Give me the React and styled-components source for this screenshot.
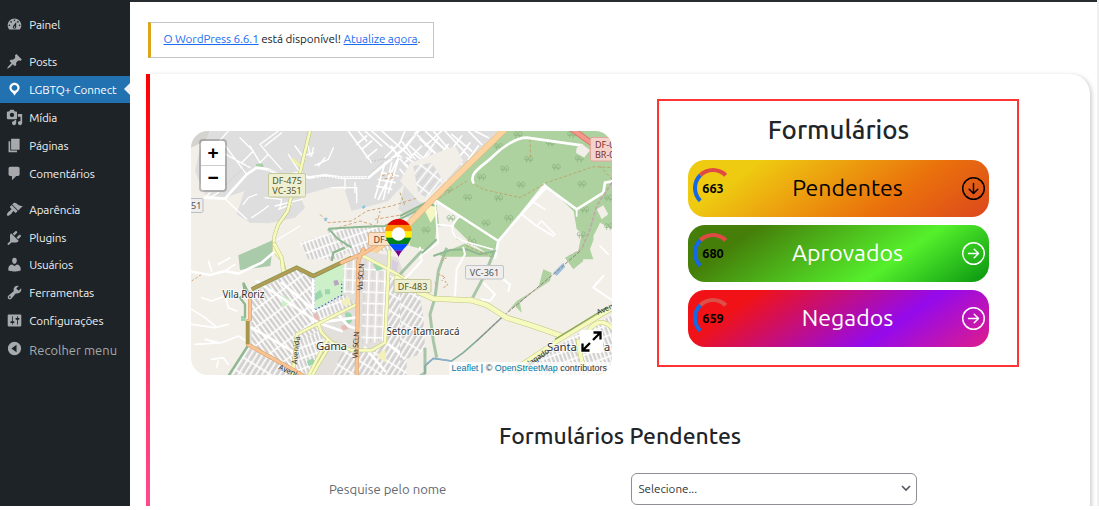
import React from "react";
import styled, { createGlobalStyle, css } from "styled-components";
import { BsArrowRightCircle, BsArrowDownCircle } from "react-icons/bs";

const Global = createGlobalStyle`
  * { box-sizing: border-box; }
  body { margin: 0; background: #fff; overflow: hidden; font-family: Ubuntu, "Noto Sans", "Open Sans", sans-serif; color: #212529; }
`;

const Page = styled.div`
  height: 510px;
  width: 1099px;
  padding-bottom: 4px;
  background: #fff;
`;
const Screen = styled.div`
  display: flex;
  height: 506px;
  overflow: hidden;
  border-right: 2px solid #f0f0f1;
`;

/* ---------- sidebar ---------- */
const Sidebar = styled.nav`
  width: 130px;
  flex: none;
  background: #1d2327;
  padding-top: 11px;
`;
const Separator = styled.div`
  height: ${(p) => p.$h}px;
`;
const MenuItem = styled.div`
  position: relative;
  height: 27.85px;
  display: flex;
  align-items: center;
  padding-left: 6px;
  font-size: 11.7px;
  letter-spacing: ${(p) => p.$ls ?? -0.14}px;
  white-space: nowrap;
  color: #f0f0f1;
  svg {
    width: 17px;
    height: 17px;
    flex: none;
    margin-right: 6.2px;
    fill: #a7aaad;
  }
  ${(p) =>
    p.$active &&
    css`
      background: #2271b1;
      color: #fff;
      svg { fill: #fff; }
      &::after {
        content: "";
        position: absolute;
        right: 0;
        top: 7.5px;
        border: 6.5px solid transparent;
        border-left: 0;
        border-right-color: #f0f0f1;
      }
    `}
  ${(p) =>
    p.$muted &&
    css`
      height: 31px;
      font-size: 12.9px;
      letter-spacing: 0.05px;
      color: #a7aaad;
      svg { transform: translateY(-2px); }
    `}
`;

const ICONS = {
  dashboard:
    "M3.76 16h12.48c1.1-1.37 1.76-3.11 1.76-5 0-4.42-3.58-8-8-8s-8 3.58-8 8c0 1.89.66 3.63 1.76 5zM10 4c.55 0 1 .45 1 1s-.45 1-1 1-1-.45-1-1 .45-1 1-1zM6 6c.55 0 1 .45 1 1s-.45 1-1 1-1-.45-1-1 .45-1 1-1zm8 0c.55 0 1 .45 1 1s-.45 1-1 1-1-.45-1-1 .45-1 1-1zm-5.37 5.55L12 7v6c0 1.1-.9 2-2 2s-2-.9-2-2c0-.57.24-1.08.63-1.45zM4 10c.55 0 1 .45 1 1s-.45 1-1 1-1-.45-1-1 .45-1 1-1zm12 0c.55 0 1 .45 1 1s-.45 1-1 1-1-.45-1-1 .45-1 1-1zm-5 3c0-.55-.45-1-1-1s-1 .45-1 1 .45 1 1 1 1-.45 1-1z",
  post: "M10.44 3.02l1.82-1.82 6.36 6.35-1.83 1.82c-1.05-.68-2.48-.57-3.41.36l-.75.75c-.92.93-1.04 2.35-.35 3.41l-1.83 1.82-2.41-2.41-2.8 2.79c-.42.42-3.38 2.71-3.8 2.29s1.86-3.39 2.28-3.81l2.79-2.79L4.1 9.36l1.83-1.82c1.05.69 2.48.57 3.4-.36l.75-.75c.93-.92 1.05-2.35.36-3.41z",
  location:
    "M10 2C6.69 2 4 4.69 4 8c0 2.02 1.17 3.71 2.53 4.89.43.37 1.18.96 1.85 1.83.74.97 1.41 2.01 1.62 2.71.21-.7.88-1.74 1.62-2.71.67-.87 1.42-1.46 1.85-1.83C14.83 11.71 16 10.02 16 8c0-3.31-2.69-6-6-6zm0 2.56c1.9 0 3.44 1.54 3.44 3.44S11.9 11.44 10 11.44 6.56 9.9 6.56 8 8.1 4.56 10 4.56z",
  media:
    "M13 11V4c0-.55-.45-1-1-1h-1.67L9 1H5L3.67 3H2c-.55 0-1 .45-1 1v7c0 .55.45 1 1 1h10c.55 0 1-.45 1-1zM7 4.5c1.38 0 2.5 1.12 2.5 2.5S8.38 9.5 7 9.5 4.5 8.38 4.5 7 5.62 4.5 7 4.5zM14 6h5v10.5c0 1.38-1.12 2.5-2.5 2.5S14 17.88 14 16.5s1.12-2.5 2.5-2.5c.17 0 .34.02.5.05V9h-3V6zm-4 8.05V13h2v3.5c0 1.38-1.12 2.5-2.5 2.5S7 17.88 7 16.5 8.12 14 9.5 14c.17 0 .34.02.5.05z",
  page: "M6 15V2h10v13H6zm-1 1h8v2H3V5h2v11z",
  comments:
    "M5 2h9c1.1 0 2 .9 2 2v7c0 1.1-.9 2-2 2h-2l-5 5v-5H5c-1.1 0-2-.9-2-2V4c0-1.1.9-2 2-2z",
  appearance:
    "M14.48 11.06L7.41 3.99l1.5-1.5c.5-.56 2.3-.47 3.51.32 1.21.8 1.43 1.28 2.91 2.1 1.18.64 2.45 1.26 4.45.85zm-.71.71L6.7 4.7 4.93 6.47c-.39.39-.39 1.02 0 1.41l1.06 1.06c.39.39.39 1.03 0 1.42-.6.6-1.43 1.11-2.21 1.69-.35.26-.7.53-1.01.84C1.43 14.23.4 16.08 1.4 17.07c.99 1 2.84-.03 4.18-1.36.31-.31.58-.66.85-1.02.57-.78 1.08-1.61 1.69-2.21.39-.39 1.02-.39 1.41 0l1.06 1.06c.39.39 1.02.39 1.41 0z",
  plugins:
    "M13.11 4.36L9.87 7.6 8 5.73l3.24-3.24c.35-.34 1.05-.2 1.56.32.52.51.66 1.21.31 1.55zm-8 1.77l.91-1.12 9.01 9.01-1.19.84c-.71.71-2.63 1.16-3.82 1.16H6.14L4.9 17.26l-1.5 1.2c-.38.38-.97.38-1.35 0s-.38-.97 0-1.35l1.4-1.4 1.340-1.35V12.1c0-1.190-.390-5.260.320-5.970zM17.51 8.760L14.270 12 12.400 10.130l3.240-3.240c.350-.340 1.050-.200 1.560.320.520.510.660 1.210.310 1.550z",
  users:
    "M10 9.25c-2.27 0-2.73-3.44-2.73-3.44C7 4.02 7.82 2 9.97 2c2.16 0 2.98 2.02 2.71 3.81 0 0-.41 3.44-2.68 3.44zm0 2.57L12.72 10c2.39 0 4.52 2.33 4.52 4.53v2.49s-3.65 1.13-7.24 1.13c-3.65 0-7.24-1.13-7.24-1.13v-2.49c0-2.25 1.94-4.48 4.47-4.48z",
  tools:
    "M16.68 9.77c-1.34 1.34-3.3 1.67-4.95.99l-5.41 6.52c-.99.99-2.59.99-3.58 0s-.99-2.59 0-3.57l6.52-5.42c-.68-1.65-.35-3.61.99-4.95 1.28-1.28 3.12-1.62 4.72-1.06l-2.89 2.89 2.82 2.82 2.86-2.87c.53 1.58.18 3.39-1.08 4.65zM3.81 16.21c.4.39 1.04.39 1.43 0 .4-.4.4-1.04 0-1.43-.39-.4-1.03-.4-1.43 0-.39.39-.39 1.03 0 1.43z",
  settings:
    "M18 16V4c0-.55-.45-1-1-1H3c-.55 0-1 .45-1 1v12c0 .55.45 1 1 1h14c.55 0 1-.45 1-1zM8 11h1c.55 0 1 .45 1 1s-.45 1-1 1H8v1.5c0 .28-.22.5-.5.5s-.5-.22-.5-.5V13H6c-.55 0-1-.45-1-1s.45-1 1-1h1V5.5c0-.28.22-.5.5-.5s.5.22.5.5V11zm5-2h-1c-.55 0-1-.45-1-1s.45-1 1-1h1V5.5c0-.28.22-.5.5-.5s.5.22.5.5V7h1c.55 0 1 .45 1 1s-.45 1-1 1h-1v5.5c0 .28-.22.5-.5.5s-.5-.22-.5-.5V9z",
  collapse:
    "M10 2.2a7.8 7.8 0 1 0 0 15.6a7.8 7.8 0 1 0 0-15.6zM12.4 5.6v8.8L6.4 10z",
};

const Item = ({ icon, label, ...rest }) => (
  <MenuItem {...rest}>
    <svg viewBox="0 0 20 20">
      <path fillRule="evenodd" d={ICONS[icon]} />
    </svg>
    {label}
  </MenuItem>
);

/* ---------- main column ---------- */
const Main = styled.main`
  flex: 1;
  border-top: 2px solid #272c31;
  padding: 20px 8px 0 16px;
`;
const Notice = styled.div`
  width: 286px;
  height: 36px;
  margin-left: 2px;
  border: 1px solid #c3c4c7;
  border-left: 3px solid #dba617;
  display: flex;
  align-items: center;
  padding: 0 0 3px 12.5px;
  font-size: 11.7px;
  letter-spacing: -0.09px;
  white-space: pre;
  a { color: #1a6df0; text-decoration: underline; }
`;
const Card = styled.section`
  position: relative;
  margin-top: 16px;
  width: 943.5px;
  height: 480px;
  padding: 24.5px 70px 0 45px;
  border-radius: 0 20px 0 0;
  box-shadow: 2px 1px 4px rgba(0, 0, 0, 0.18);
  background: linear-gradient(#ff0000 0, #ff1a2c 110px, #ff4a90 433px) left / 4px 100% no-repeat, #fff;
`;
const TopRow = styled.div`
  display: flex;
  align-items: flex-start;
  justify-content: space-between;
`;
const MapBox = styled.div`
  position: relative;
  width: 421px;
  height: 244px;
  margin-top: 32px;
  border-radius: 17px;
  overflow: hidden;
  > svg { display: block; }
`;
const ZoomControl = styled.div`
  position: absolute;
  left: 8px;
  top: 8px;
  width: 28px;
  border: 2px solid rgba(0, 0, 0, 0.22);
  border-radius: 4px;
  background: #fff;
  background-clip: padding-box;
`;
const ZoomButton = styled.div`
  height: 24.5px;
  display: grid;
  place-items: center;
  font: bold 19px/24px "Liberation Sans", sans-serif;
  color: #000;
  & + & { border-top: 1px solid #ccc; }
`;
const Attribution = styled.div`
  position: absolute;
  right: 0;
  bottom: 0;
  height: 13px;
  padding: 0 5px 0 3px;
  background: rgba(255, 255, 255, 0.75);
  font: 8.95px/13px "Liberation Sans", sans-serif;
  white-space: pre;
  color: #333;
  a { color: #0078a8; }
`;
const Expand = styled.div`
  position: absolute;
  right: 9px;
  bottom: 22px;
  width: 23px;
  height: 23px;
  background: #fff;
  border-radius: 3px;
  svg { display: block; }
`;

const Panel = styled.div`
  width: 362px;
  height: 268.5px;
  margin-right: 0.5px;
  border: 2px solid #ff3535;
  padding: 13.5px 28px 0 29px;
`;
const PanelTitle = styled.h2`
  margin: 0 0 13.5px;
  height: 32px;
  font-size: 25.9px;
  line-height: 32px;
  font-weight: 550;
  text-align: center;
`;
const StatusButton = styled.div`
  display: flex;
  align-items: center;
  height: 57px;
  margin-bottom: 8px;
  padding: 0 4.5px 0 5px;
  border-radius: 17px;
  background: linear-gradient(145deg, ${(p) => p.$stops});
  color: ${(p) => p.$color};
  > svg { width: 23px; height: 23px; flex: none; }
`;
const Counter = styled.div`
  width: 40px;
  height: 40px;
  flex: none;
  display: flex;
  align-items: center;
  justify-content: center;
  border: 4px solid transparent;
  border-left-color: #1668e3;
  border-top-color: ${(p) => p.$top || "#e04a44"};
  border-radius: 50%;
  color: #000;
  font-size: 12.7px;
  line-height: 16px;
  padding-bottom: 1px;
  font-weight: 700;
`;
const StatusLabel = styled.span`
  flex: 1;
  text-align: center;
  padding: 0 0 3px 0.5px;
  font-size: 23.1px;
`;

const SectionTitle = styled.h3`
  margin: 46px 0 0 -1px;
  width: 860px;
  height: 30px;
  font-size: 22.9px;
  line-height: 30px;
  font-weight: 550;
  text-align: center;
`;
const SearchRow = styled.div`
  display: flex;
  align-items: center;
  margin-top: 22px;
  padding-left: 138px;
`;
const SearchLabel = styled.label`
  width: 302px;
  font-size: 13.1px;
  color: #646970;
`;
const Select = styled.div`
  width: 286px;
  height: 32px;
  border: 1px solid #8c8f94;
  border-radius: 6px;
  padding: 0 5px 1px 6.5px;
  display: flex;
  align-items: center;
  justify-content: space-between;
  font-size: 11.6px;
  color: #2c3338;
`;

/* ---------- map drawing ---------- */
const MapText = styled.text`
  font-family: "Noto Sans", sans-serif;
  font-size: ${(p) => p.$s || 11}px;
  fill: ${(p) => p.$c || "#333"};
  paint-order: stroke;
  stroke: ${(p) => (p.$halo ? "rgba(255,255,255,.75)" : "none")};
  stroke-width: 2px;
`;

const TREES = [
  [295, 60], [385, 98], [313, 127], [468, 122], [244, 152], [362, 175], [545, 173], [202, 213],
  [295, 215], [257, 290], [77, 311], [152, 275], [553, 250], [215, 347], [543, 325], [450, 50],
  [625, 215], [537, 97], [353, 24], [514, 24], [625, 300], [142, 190], [325, 275],
];
const Tree = ({ x, y }) => (
  <path
    transform={`translate(${x} ${y})`}
    d="M-5 12V-2M-10 4a5.500 7 0 1 1 9 0zM6 12V0M2 5a5.500 9 0 1 1 10 0z"
    fill="none"
    stroke="#86b07b"
    strokeWidth="2"
  />
);
const Road = ({ d, w = 12, c = "#f7fabf", e = "#c3c87c" }) => (
  <g fill="none" strokeLinejoin="round" strokeLinecap="round">
    <path d={d} stroke={e} strokeWidth={w + 3} />
    <path d={d} stroke={c} strokeWidth={w} />
  </g>
);
const Streets = ({ d, w = 5 }) => (
  <path d={d} fill="none" stroke="#fff" strokeWidth={w} strokeLinejoin="round" strokeLinecap="round" />
);
const Grid = ({ id, a, w = 13, h = 44, bg = "#d8d6d5" }) => (
  <pattern id={id} width={w} height={h} patternUnits="userSpaceOnUse" patternTransform={`rotate(${a})`}>
    <rect width={w} height={h} fill={bg} />
    <path d={`M0 0H${w}M0 0V${h}`} stroke="#fff" strokeWidth="9" />
    <path d={`M${w / 2 + 2} 6V${h - 6}`} stroke="#b9b5b4" strokeWidth="1.6" strokeDasharray="4 3" />
  </pattern>
);
const Shield = ({ x, y, w, h, fill, stroke, color, lines, tx }) => (
  <g>
    <rect x={x} y={y} width={w} height={h} rx="1.5" fill={fill} stroke={stroke} />
    {lines.map((t, i) => (
      <MapText key={t} x={tx ?? x + w / 2} y={y + 10 + i * 10} $s={9} $c={color} textAnchor={tx ? "start" : "middle"}>
        {t}
      </MapText>
    ))}
  </g>
);

const CityMap = () => (
  <svg width="421" height="244" viewBox="191 130 421 244">
    <defs>
      <Grid id="gA" a={-36} />
      <Grid id="gB" a={32} w={15} />
      <Grid id="gC" a={2} w={24} h={34} bg="#e2dfdc" />
      <Grid id="gD" a={-20} w={12} h={30} />
      <Grid id="gE" a={38} w={24} h={52} bg="#dddcdc" />
      <clipPath id="pinClip">
        <path d="M398.500 256c-2-7-13.500-13-13.500-24.500a13.500 13.500 0 0 1 27 0c0 11.500-11.500 17.500-13.500 24.500z" />
      </clipPath>
    </defs>
    <rect x="191" y="130" width="421" height="244" fill="#f2efe9" />

    {/* north-west quarter */}
    <g transform="translate(185 125) scale(.33333)">
      <path fill="#dfdede" d="M78 15H965L930 60 760 225 700 300 640 250 660 170 610 225 500 255 475 180 430 185 345 210 360 245 330 275 250 292 195 290 155 265 178 195 120 215 60 205 30 135 50 50z" />
      <path fill="#d5d3cf" d="M18 40L50 15H75L60 45 18 65z" />
      <path fill="#a9cbaa" d="M160 388L262 343V375L256 420 165 432z" />
      <path fill="url(#gD)" d="M425 310L560 305 640 290 660 375H560L500 390 480 365 435 330z" />
      <path fill="url(#gD)" d="M345 350L425 325 485 375 470 400 370 400z" />
      <path fill="#a8cfa8" d="M212 115l20-3 5 10-22 3z" />
      <Streets w={8} d="M60 215L120 218 185 145 215 125 250 130 290 150 345 140 370 155 420 148 470 155 550 155 660 65 700 15" />
      <Streets w={4} d="M85 65L195 125M110 45L185 145M130 15L85 65 50 110M165 35L205 75 170 110M195 60L225 110 250 85 225 55 280 15M250 85L290 130M310 85L345 140M330 60L360 100M355 90L385 80M290 20L240 60M370 60L375 90M385 65L380 90M390 118L430 100 445 65M420 95L400 120M480 158V190M440 185H515V230M510 200V170M120 218L185 280M175 235L190 215 215 205M200 275L230 255 250 240M270 240L350 220M240 215L290 220 285 245M280 250L320 235M320 315L345 300 270 345M60 215L75 200M75 215L100 200" />
      <Streets w={5} d="M490 15L560 110M520 15L545 45M540 15L590 60M560 15L650 95M590 15L680 95M515 55L545 30M530 70L560 45M545 95L575 70M600 95L650 45 690 100M620 60L640 95 580 220M600 110L570 215M620 110L595 220M640 100L610 200M575 180L620 190M580 160L630 170M590 140L640 150M660 15L640 60M690 20L760 90M720 15L780 70M745 15L830 115M640 95L760 200M665 95L700 120M690 85L790 170M760 35L690 130M790 55L710 165M820 85L745 190M850 15L890 55M780 15L850 90M700 150L760 230M685 120L665 140 720 210M770 15L720 60M800 25L860 75M870 15L910 35M675 60L740 120M705 40L775 105M735 30L805 95M655 110L735 200M645 130L715 215M710 60L660 110M740 75L675 150M770 100L700 185M830 30L800 70M855 50L825 90M880 60L850 100" />
      <g stroke="#bdbbb9" strokeWidth="1.500" strokeDasharray="5 4" fill="none">
        <path d="M550 105L650 95M560 110L600 95M650 45L720 15M540 160L600 100M705 45L770 120M730 30L800 110M680 90L740 160M700 140L650 100M105 190L190 115M250 130L300 150M390 153L550 155" />
      </g>
      <path d="M405 265L430 290 500 285 545 255 620 240 700 215M460 305L525 285 575 300 585 255M570 280L660 265M590 150L620 140 625 155 590 160" fill="none" stroke="#cfa77a" strokeWidth="3" strokeDasharray="10 6" />
      <path d="M425 275l-5 10M540 240l-8 6" stroke="#8dc6dd" strokeWidth="7" />
      <path d="M430 308L520 303 600 300 660 272 720 240M430 308L460 340 500 365" fill="none" stroke="#8fb890" strokeWidth="6" />
      <Road w={8} d="M376 10L345 140 318 215 308 255 280 295 268 330V375L290 400 298 430" e="#b9bf70" />
      <path d="M322 98L345 120" stroke="#eff2a0" strokeWidth="8" />
    </g>

    {/* north-east quarter */}
    <g transform="translate(400 125) scale(.33333)">
      <path fill="#f2efe9" d="M30 112L165 60 190 105 85 225 60 230 0 165z" />
      <path fill="url(#gE)" d="M40 120L95 110 130 165 80 215 55 200z" />
      <path fill="#aed1a0" d="M318 15H640V165L555 235 520 255 432 170 295 345 280 395 205 345 160 300 180 270 105 222z" />
      <path fill="#aed1a0" d="M60 235L110 240 118 300 160 320 190 350 280 392 130 392 90 375 30 360 20 300z" />
      <path fill="#f2efe9" d="M110 300L160 310 170 340 200 350 150 372 100 392 60 392 105 345z" />
      <path fill="#aed1a0" d="M520 250L560 225 640 160V310L600 290 570 370 580 400H530L545 320 530 310z" />
      <path fill="#f2efe9" d="M590 250L610 238 625 265 605 280zM580 330L600 292 640 330V390H585z" />
      <path fill="#f5f8c5" d="M68 240L98 228 112 260 92 290z" />
      {TREES.map(([x, y]) => <Tree key={`${x}-${y}`} x={x} y={y} />)}
      <path d="M390 40L392 100M215 170L250 190 360 215 440 170 580 122 640 125M105 225L200 165M210 330L200 360 280 395M600 120L640 165M0 200L15 240" fill="none" stroke="#b9a86a" strokeWidth="3" strokeDasharray="9 6" />
      <path d="M0 270L75 232 110 240M100 390L150 372 200 370 240 385 290 375 290 355M60 388L110 340" fill="none" stroke="#8fb890" strokeWidth="6" />
      <Streets w={8} d="M220 170C205 140 250 120 280 90S350 35 380 35L545 58M105 222L295 345 285 395M295 345L350 280 435 180 530 250 610 200 615 170 640 165" />
      <Streets d="M105 222L110 295 160 300M180 270C145 300 150 330 190 345L285 372M110 295L115 350 60 392M365 265L410 300 460 330 M395 225L435 250M410 300L425 285 465 325M440 185L360 270M530 250V270M600 360L625 385" />
      <path fill="#f2efe9" d="M530 65l15-12 25 20-18 22-24-15z" />
      <path d="M645 155L590 240 570 310 545 370 500 395" fill="none" stroke="#c2a5ab" strokeWidth="5" strokeDasharray="12 5" />
      <path d="M510 5L580 55" stroke="#da7968" strokeWidth="18" /><path d="M510 5L580 55" stroke="#f3998b" strokeWidth="12" />
      <Streets w={7} d="M300 15L185 130 85 232" />
      <Road w={16} c="#fbd3a1" e="#e9b673" d="M325 0L110 208 20 300-90 385-150 430" />
    </g>

    {/* south-west quarter */}
    <g transform="translate(185 250) scale(.33333)">
      <path fill="#e3e0dc" d="M190 130L335 50 385 75 500 20 550 0 640 20 660 80V380H130L188 285z" />
      <path fill="url(#gA)" d="M200 130L335 55 385 75V180L400 240 330 375 200 280z" />
      <path fill="url(#gB)" d="M135 375L190 290 330 365V380z" />
      <path fill="url(#gD)" d="M388 180L480 130 510 160 400 215z" />
      <path fill="url(#gD)" d="M345 270L400 240 430 285 380 360 335 375z" />
      <path fill="url(#gC)" d="M475 30L515 20 510 130 475 125zM535 20L605 60 600 270 530 280z" />
      <path fill="url(#gB)" d="M610 75H665V380H440L470 300H540L605 275z" />
      <path fill="#cdf0c8" d="M388 82L475 38 473 130 388 178zM290 132L320 150 292 172z" />
      <path d="M388 82V178L470 132V90" fill="none" stroke="#3b62c4" strokeWidth="4" strokeDasharray="4 7" />
      <path fill="#9dd6ae" d="M388 130l18-14 8 20-24 14zM420 115h15v15h-15zM480 185q20-5 22 15t-20 20zM168 195h14v15h-14zM565 40l15-5 15 20-20 5zM365 330l20-8 6 16-20 8z" />
      <path fill="#b9a5c2" d="M445 90l12-4 6 14-14 5z" />
      <path fill="#f3f1b9" d="M470 150l20-12 8 20-22 8zM580 310l20-15 5 40-25-15z" />
      <path fill="#e7bcb5" d="M383 190l12-5 15 35-12 5zM468 225l18-6 4 15-18 5z" />
      <path fill="#d9cde0" d="M620 25l20 10-5 35-15-8z" />
      <Streets w={8} d="M10 60L75 72 120 60 160 68 230 35 265 5M215 90L400 215 470 240M200 230L330 305M290 95L390 180M400 215L510 200M385 180V80M455 185L490 225 520 235M610 280L660 320M540 290L600 360" />
      <Streets w={5} d="M50 140L80 150 120 135 130 170 155 180M20 220L90 230 130 220M20 175L60 200 90 225M30 280L110 275 160 255 185 270M60 265L100 275M80 325L115 320 130 340M100 330L95 350M150 40L120 60M70 30L80 60M135 20L100 40" />
      <path d="M20 90L50 70" stroke="#d4ab79" strokeWidth="3" strokeDasharray="8 5" />
      <path d="M130 375L188 285M190 125L175 95 180 130 165 140 180 160V200M440 30L445 5 480-10" fill="none" stroke="#8fb890" strokeWidth="7" />
      <Road w={9} d="M268-20L290 20 295 65 300 60" />
      <Road w={8} d="M515 160L335 250 322 385M400 220L410 245 440 275 500 298H560L600 275 613 0M535 15L620 60 680 95M440 275L400 340 375 385M425 270L370 375" />
      <path d="M200 115L335 50 385 75 500 20" fill="none" stroke="#8c9a4d" strokeWidth="13" /><path d="M200 115L335 50 385 75 500 20" fill="none" stroke="#b79b58" strokeWidth="7" />
      <Road w={9} c="#f9c394" e="#d69d65" d="M195 125V205M188 210V280L250 315 340 365 370 385M535-5L520 30 515 375M470 35L540 5 600-35" />
      <path d="M188 210V280" stroke="#a6974c" strokeWidth="10" />
    </g>

    {/* south-east quarter */}
    <g transform="translate(400 250) scale(.33333)">
      <path fill="url(#gB)" d="M0 110L60 130 70 200 75 290 60 310 0 330z" />
      <path fill="url(#gD)" d="M340 370L470 285 530 250 640 190V350L590 375z" />
      <path fill="#aed1a0" d="M320 185L350 150 415 110 430 55 455 65 450 90 390 130 360 155 365 185 345 165zM495 20L545-5 550 30 520 55z" />
      <path fill="#9bbfd8" d="M460 65L490 35 495 48 470 75z" />
      <Streets w={6} d="M60-10L65 30 0 100M165 135L170 55 195 10 190-10M580 110L610 75M250 95L285 130 270 150 245 145M270 55L330 100 325 120M580 110L640 150M590 95L580 110" />
      <path d="M105 140L90 190 100 270 110 320M140-10L115 60 105 140M218 140L255 70 285-5M75 290L75 365 60 375M0 70L65 0" fill="none" stroke="#95ba96" strokeWidth="9" opacity=".8" />
      <path d="M310 195L235 265 190 305 155 330 100 322 75 345V370" fill="none" stroke="#83ad9d" strokeWidth="5" />
      <path d="M540 0L460 70 400 120 310 195 230 270" fill="none" stroke="#967d86" strokeWidth="3" strokeDasharray="12 4" />
      <path d="M155 330L100 322 78 340" fill="none" stroke="#88aed1" strokeWidth="4" />
      <path d="M115 70l20 8-10 12M140 20l-15 10M135 90l8 12-16 10M105 95l8 10" fill="none" stroke="#d19d67" strokeWidth="3" strokeDasharray="7 4" />
      <Road w={14} d="M-10 80L60 125 100 143 215 148 260 162 320 200 400 225 485 255" e="#bfc583" />
      <Road w={11} d="M350 350L480 265 640 170M555 260C575 210 610 200 640 235M535 270C540 310 545 330 550 345M640 350L600 375" />
      <path d="M350 365L450 300M465 265L620 170" stroke="#8ca956" strokeWidth="4" />
    </g>

    <MapText $halo x="222.500" y="296.500" $s={10} textLength="42">Vila Roriz</MapText>
    <MapText $halo x="316" y="349" $s={11.500} textLength="31">Gama</MapText>
    <MapText $halo x="386.500" y="333.500" $s={10} textLength="73">Setor Itamaracá</MapText>
    <MapText $halo x="547" y="349.500" $s={11.500} textLength="30">Santa</MapText>
    <MapText $halo x="604" y="349.500" $s={11}>a</MapText>
    <MapText $s={7.2} transform="translate(362.500 289.500) rotate(-87)" textLength="27">Via SCLN</MapText>
    <MapText $s={7.2} transform="translate(357.500 357.500) rotate(-87)" textLength="27">Via SCLN</MapText>
    <MapText $s={7.5} transform="translate(297 363.500) rotate(-84)" textLength="28">Avenida</MapText>
    <MapText $s={7.5} transform="translate(278 368) rotate(24)">Aveni</MapText>
    <MapText $s={7.5} transform="translate(598 314) rotate(-24)">Aven</MapText>
    <MapText $s={7.5} transform="translate(530 365) rotate(-35)">lagado</MapText>

    <Shield x={268.500} y={172.500} w={37} h={23.500} fill="#eff0d3" stroke="#c4c99b" color="#53562a" lines={["DF-475", "VC-351"]} />
    <Shield x={172} y={197.500} w={31} h={14} tx={191} fill="#eee" stroke="#bcbcc4" color="#555" lines={["51"]} />
    <Shield x={368.500} y={231.500} w={40} h={13} tx={373.500} fill="#fae0c8" stroke="#d9b58d" color="#6b4323" lines={["DF-"]} />
    <Shield x={394} y={278.500} w={37} h={13} fill="#eff0d3" stroke="#c4c99b" color="#53562a" lines={["DF-483"]} />
    <Shield x={465.500} y={264.500} w={38} h={13.500} fill="#eee" stroke="#c4c4c8" color="#555" lines={["VC-361"]} />
    <Shield x={590.500} y={136.500} w={42} h={23.500} tx={595} fill="#f4d2cc" stroke="#e3a59c" color="#7c2d24" lines={["DF-0", "BR-0"]} />

    <g clipPath="url(#pinClip)">
      {["#e50000", "#ff8d00", "#ffee00", "#028121", "#004cff", "#770088"].map((c, i) => (
        <rect key={c} x="384" y={217.500 + i * 6.4} width="30" height="6.600" fill={c} />
      ))}
    </g>
    <circle cx="398.500" cy="233" r="6.800" fill="#fff" />
  </svg>
);

export default function App() {
  return (
    <Page>
      <Global />
      <Screen>
        <Sidebar>
          <Item icon="dashboard" label="Painel" />
          <Separator $h={8.9} />
          <Item icon="post" label="Posts" />
          <Item icon="location" label="LGBTQ+ Connect" $active />
          <Item icon="media" label="Mídia" />
          <Item icon="page" label="Páginas" />
          <Item icon="comments" label="Comentários" />
          <Separator $h={8.4} />
          <Item icon="appearance" label="Aparência" />
          <Item icon="plugins" label="Plugins" />
          <Item icon="users" label="Usuários" />
          <Item icon="tools" label="Ferramentas" />
          <Item icon="settings" label="Configurações" />
          <Item icon="collapse" label="Recolher menu" $muted />
        </Sidebar>
        <Main>
          <Notice>
            <a>O WordPress 6.6.1</a> está disponível! <a>Atualize agora</a>.
          </Notice>
          <Card>
            <TopRow>
              <MapBox>
                <CityMap />
                <ZoomControl>
                  <ZoomButton>+</ZoomButton>
                  <ZoomButton>−</ZoomButton>
                </ZoomControl>
                <Expand>
                  <svg viewBox="0 0 23 23" fill="none" stroke="#000" strokeWidth="2.300">
                    <path d="M13 10L20 3M13.500 2.500H20.500V9.500M10 13L3 20M2.500 13.500V20.500H9.500" />
                  </svg>
                </Expand>
                <Attribution>
                  <a>Leaflet</a> | © <a>OpenStreetMap</a> contributors
                </Attribution>
              </MapBox>
              <Panel>
                <PanelTitle>Formulários</PanelTitle>
                <StatusButton $color="#000" $stops="#eecb11 19%, #ea720c 67%, #dc471d 100%">
                  <Counter>663</Counter>
                  <StatusLabel>Pendentes</StatusLabel>
                  <BsArrowDownCircle />
                </StatusButton>
                <StatusButton $color="#fff" $stops="#457f0a 19%, #55f02c 67%, #089410 100%">
                  <Counter>680</Counter>
                  <StatusLabel>Aprovados</StatusLabel>
                  <BsArrowRightCircle />
                </StatusButton>
                <StatusButton $color="#fff" $stops="#f01216 19%, #940aec 67%, #e01c8a 100%">
                  <Counter $top="#dc5048">659</Counter>
                  <StatusLabel>Negados</StatusLabel>
                  <BsArrowRightCircle />
                </StatusButton>
              </Panel>
            </TopRow>
            <SectionTitle>Formulários Pendentes</SectionTitle>
            <SearchRow>
              <SearchLabel>Pesquise pelo nome</SearchLabel>
              <Select>
                Selecione...
                <svg width="10" height="10" viewBox="0 0 10 10" fill="none" stroke="#50575e" strokeWidth="1.600">
                  <path d="M1 3l4 4 4-4" />
                </svg>
              </Select>
            </SearchRow>
          </Card>
        </Main>
      </Screen>
    </Page>
  );
}
